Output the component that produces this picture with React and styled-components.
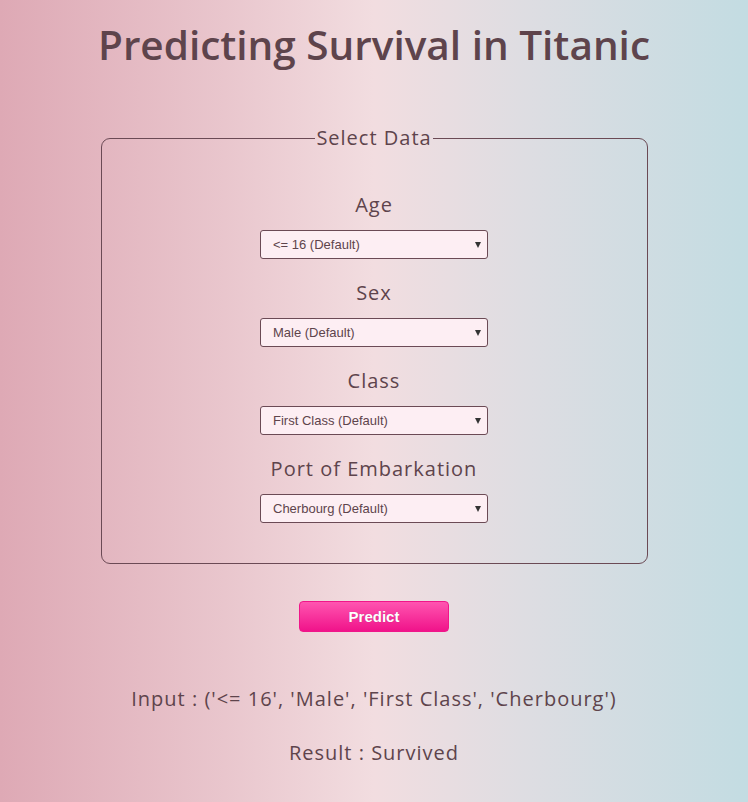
import React from "react"
import styled, { createGlobalStyle } from "styled-components"

const GlobalStyle = createGlobalStyle`
  html, body {
    margin: 0;
    padding: 0;
  }
  body {
    font-family: "Open Sans", sans-serif;
    color: #5e444c;
  }
`

const fields = [
  { label: "Age", value: "<= 16 (Default)" },
  { label: "Sex", value: "Male (Default)" },
  { label: "Class", value: "First Class (Default)" },
  { label: "Port of Embarkation", value: "Cherbourg (Default)" },
]

function App() {
  return (
    <Page>
      <GlobalStyle />
      <Title>Predicting Survival in Titanic</Title>
      <DataBox>
        <Legend>Select Data</Legend>
        {fields.map((f) => (
          <Field key={f.label}>
            <Label>{f.label}</Label>
            <SelectWrap>
              <Select defaultValue={f.value}>
                <option>{f.value}</option>
              </Select>
              <Arrow />
            </SelectWrap>
          </Field>
        ))}
      </DataBox>
      <PredictButton>Predict</PredictButton>
      <Output>Input : ('&lt;= 16', 'Male', 'First Class', 'Cherbourg')</Output>
      <Output $result>Result : Survived</Output>
    </Page>
  )
}

export default App

const Page = styled.div`
  width: 748px;
  height: 802px;
  box-sizing: border-box;
  padding-top: 20px;
  display: flex;
  flex-direction: column;
  align-items: center;
  background: linear-gradient(
    to right,
    #dea9b5 0%,
    #e9c6cd 30%,
    #f2dde0 50%,
    #dedde2 70%,
    #c3dce2 100%
  );
`

const Title = styled.h1`
  margin: 0;
  font-size: 40.5px;
  font-weight: 600;
  line-height: 50px;
  color: #5e444c;
`

const DataBox = styled.fieldset`
  margin: 55px 0 0;
  width: 547px;
  height: 439px;
  box-sizing: border-box;
  border: 1px solid #6b4a55;
  border-radius: 9px;
  padding: 41px 0 0;
  display: flex;
  flex-direction: column;
  align-items: center;
  gap: 21px;
`

const Legend = styled.legend`
  margin: 0 auto;
  padding: 0 1px;
  font-size: 20px;
  letter-spacing: 1px;
  line-height: 26px;
`

const Field = styled.div`
  display: flex;
  flex-direction: column;
  align-items: center;
  gap: 12px;
`

const Label = styled.div`
  font-size: 20px;
  letter-spacing: 1px;
  line-height: 26px;
`

const SelectWrap = styled.div`
  position: relative;
  width: 228px;
  height: 29px;
`

const Select = styled.select`
  width: 100%;
  height: 100%;
  box-sizing: border-box;
  padding: 0 0 0 12px;
  border: 1px solid #6b4a55;
  border-radius: 3px;
  background: #fdeef3;
  color: #5e444c;
  font-family: "Liberation Sans", Arial, sans-serif;
  font-size: 13px;
  appearance: none;
`

const Arrow = styled.span`
  position: absolute;
  right: 7px;
  top: 12px;
  width: 0;
  height: 0;
  border-left: 3.5px solid transparent;
  border-right: 3.5px solid transparent;
  border-top: 6px solid #333;
  pointer-events: none;
`

const PredictButton = styled.button`
  margin-top: 37px;
  width: 150px;
  height: 31px;
  border: 1px solid #f0168a;
  border-radius: 4px;
  background: linear-gradient(to bottom, #ff55b0, #f0138a);
  color: #fff;
  font-family: "Liberation Sans", Arial, sans-serif;
  font-weight: bold;
  font-size: 15px;
  text-shadow: 0 0 1px rgba(0, 0, 0, 0.25);
`

const Output = styled.p`
  margin: ${(p) => (p.$result ? "27px 0 0" : "53px 0 0")};
  font-size: 20px;
  letter-spacing: 1px;
  line-height: 27px;
`
